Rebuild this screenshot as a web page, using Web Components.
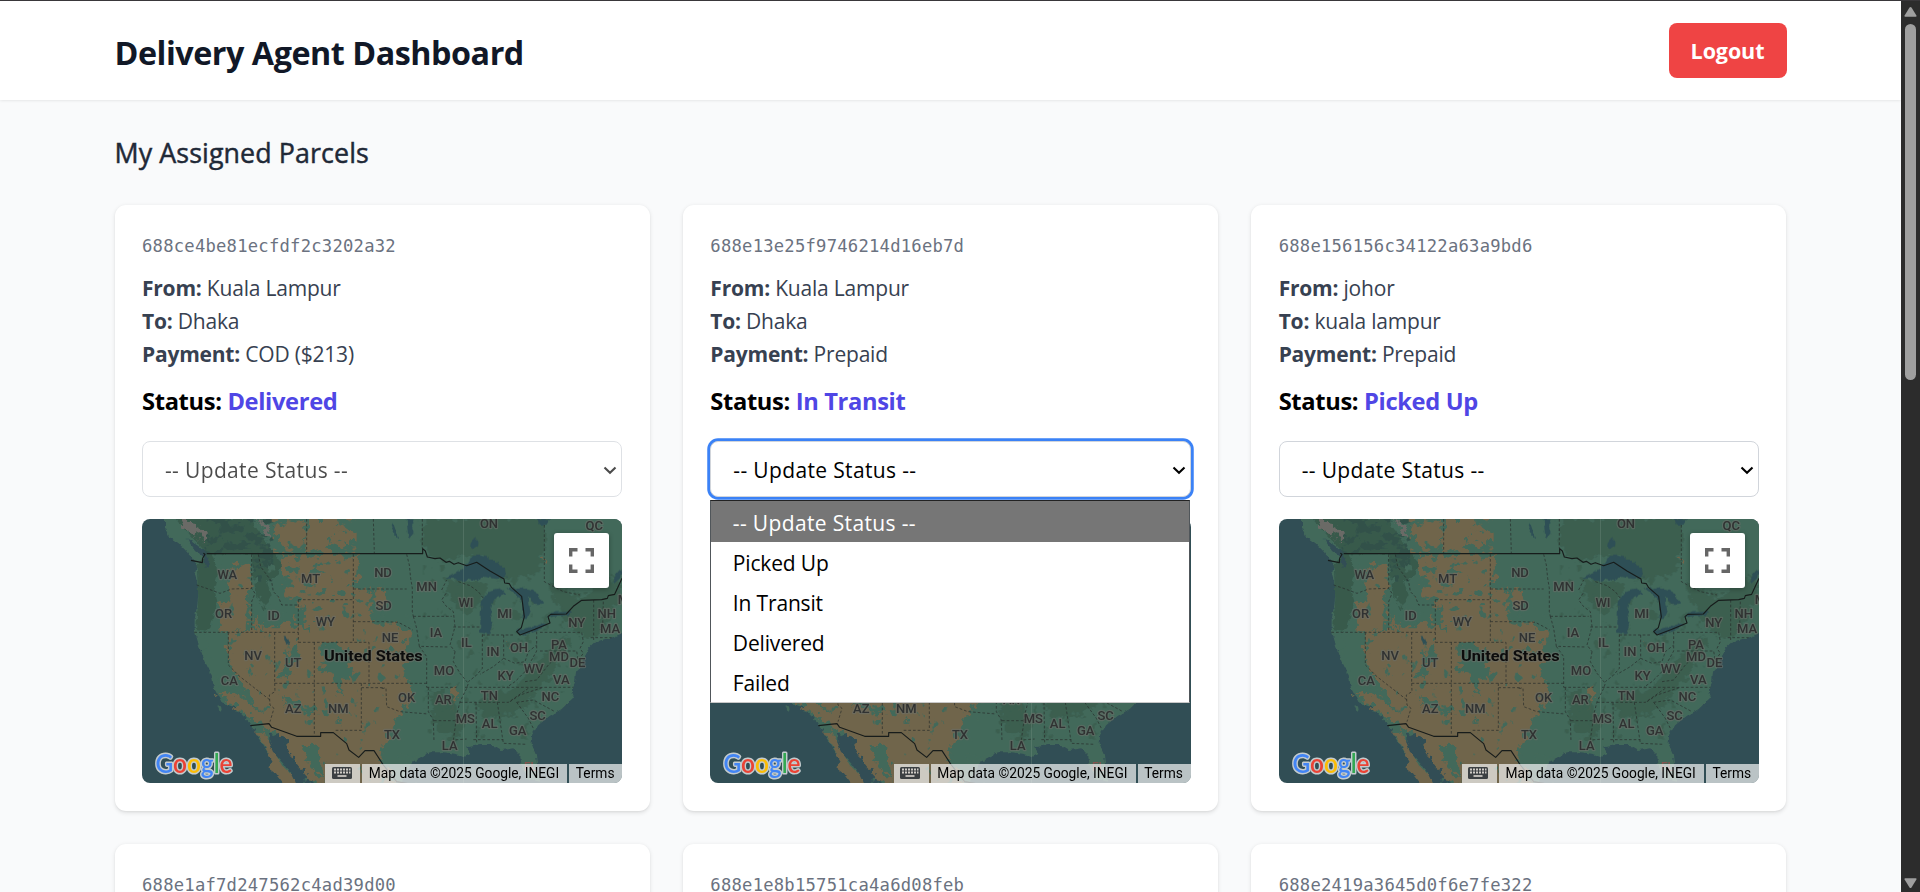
<!DOCTYPE html>
<html lang="en">
<head>
<meta charset="utf-8">
<title>Delivery Agent Dashboard</title>
<style>
html,body{margin:0;height:100%;overflow:hidden;background:#f9fafb}
body{font-family:"Open Sans","Noto Sans",sans-serif;font-size:21px;line-height:33px;color:#000}
</style>
</head>
<body>
<agent-app>
  <dash-header slot="header" heading="Delivery Agent Dashboard"></dash-header>
  <parcel-card code="688ce4be81ecfdf2c3202a32" from="Kuala Lampur" to="Dhaka" payment="COD ($213)" status="Delivered" state="disabled"></parcel-card>
  <parcel-card code="688e13e25f9746214d16eb7d" from="Kuala Lampur" to="Dhaka" payment="Prepaid" status="In Transit" state="open"></parcel-card>
  <parcel-card code="688e156156c34122a63a9bd6" from="johor" to="kuala lampur" payment="Prepaid" status="Picked Up"></parcel-card>
  <parcel-card code="688e1af7d247562c4ad39d00"></parcel-card>
  <parcel-card code="688e1e8b15751ca4a6d08feb"></parcel-card>
  <parcel-card code="688e2419a3645d0f6e7fe322"></parcel-card>
</agent-app>

<script>
class Base extends HTMLElement {
  connectedCallback() {
    if (this.shadowRoot) return;
    this.attachShadow({ mode: 'open' }).innerHTML = this.view();
  }
  a(name) { return this.getAttribute(name) || ''; }
}

customElements.define('agent-app', class extends Base {
  view() { return `
<style>
:host{display:grid;grid-template-columns:minmax(0,1fr) 19px;height:892px;box-sizing:border-box;border-top:1px solid #39373a;overflow:hidden}
.page{overflow:hidden;background:#f9fafb}
main{width:1672px;margin:0 auto;padding-top:33px}
h2{margin:0 0 33px;font-size:26.8px;line-height:39px;font-weight:400;-webkit-text-stroke:.45px #1f2937;color:#1f2937;letter-spacing:.1px}
.grid{display:grid;grid-template-columns:repeat(3,minmax(0,1fr));gap:33px}
</style>
<div class="page"><slot name="header"></slot>
<main><h2>My Assigned Parcels</h2><div class="grid"><slot></slot></div></main></div>
<window-scrollbar></window-scrollbar>`; }
});

customElements.define('window-scrollbar', class extends Base {
  view() { return `
<style>
:host{display:flex;flex-direction:column;align-items:center;box-sizing:border-box;background:#2c2c2c;padding:5px 0 3px}
svg{display:block;width:13px;height:12px;fill:#9f9f9f}
i{display:block;width:11px;height:356px;border-radius:6px;background:#9f9f9f;margin-top:6px}
.down{margin-top:auto}
</style>
<svg viewBox="0 0 13 12"><path d="M5.5 1.6q1-1.2 2 0L12.4 9.5q.6 1.2-.8 1.2H1.4q-1.4 0-.8-1.2z"/></svg><i></i>
<svg class="down" viewBox="0 0 13 12"><path d="M5.5 10.4q1 1.2 2 0L12.4 2.5q.6-1.2-.8-1.2H1.4q-1.4 0-.8 1.2z"/></svg>`; }
});

customElements.define('dash-header', class extends Base {
  view() { return `
<style>
:host{display:block;background:#fff;box-shadow:0 1.4px 3px rgba(0,0,0,.1)}
.bar{width:1672px;height:99px;box-sizing:border-box;margin:0 auto;padding-top:22px;display:flex;justify-content:space-between}
h1{margin:7px 0 0;font-size:32.3px;line-height:44px;font-weight:700;color:#111827;letter-spacing:-.47px}
button{width:118px;height:55px;border:0;border-radius:8px;background:#ef4444;color:#fff;font:700 21.5px/55px "Open Sans",sans-serif;letter-spacing:-.1px;padding:0}
</style>
<div class="bar"><h1>${this.a('heading')}</h1><button>Logout</button></div>`; }
});

customElements.define('parcel-card', class extends Base {
  view() {
    const line = (k, v) => `<div><b>${k}:</b> ${v}</div>`;
    const body = this.a('status') ? `
<div class="info">${line('From', this.a('from'))}${line('To', this.a('to'))}${line('Payment', this.a('payment'))}</div>
<div class="status">Status: <span>${this.a('status')}</span></div>
<status-select state="${this.a('state')}"></status-select>
<parcel-map></parcel-map>` : '';
    return `
<style>
:host{display:block;box-sizing:border-box;height:606px;padding:27.5px;background:#fff;border-radius:11px;box-shadow:0 1.4px 4px rgba(0,0,0,.1),0 1.4px 2.7px -1.4px rgba(0,0,0,.1)}
.code{font:17.2px/27.5px "DejaVu Sans Mono",monospace;letter-spacing:.23px;color:#6b7280;margin-bottom:12px}
.info{color:#374151;letter-spacing:-.2px}
.info b{font-weight:700;letter-spacing:-.22px}
.status{margin:11px 0 20px;font-size:23.7px;line-height:38.5px;font-weight:700;letter-spacing:-.35px}
.status span{color:#4f46e5}
parcel-map{margin-top:22px}
</style>
<div class="code">${this.a('code')}</div>${body}`;
  }
});

customElements.define('status-select', class extends Base {
  view() {
    const open = this.a('state') === 'open';
    return `
<style>
:host{display:block;position:relative;height:56px}
.box{display:flex;align-items:center;justify-content:space-between;box-sizing:border-box;height:100%;border:1px solid #d1d5db;border-radius:8px;background:#fff;padding:3px 4px 0 22px;letter-spacing:.35px}
:host([state=open]) .box{box-shadow:0 0 0 2.75px #3b82f6}
:host([state=disabled]) .box{opacity:.7}
svg{width:14px;height:9px;fill:none;stroke:currentColor;stroke-width:2.1}
</style>
<div class="box"><span>-- Update Status --</span><svg viewBox="0 0 14 9"><path d="M1.5 1.5 7 6.8 12.5 1.5"/></svg></div>
${open ? '<status-menu></status-menu>' : ''}`;
  }
});

customElements.define('status-menu', class extends Base {
  view() { return `
<style>
:host{display:block;position:absolute;z-index:5;left:0;top:59px;width:480px;box-sizing:border-box;background:#fff;border:1px solid #50565a;border-top-color:#222;border-bottom-color:#c8c8c8}
div{height:40px;line-height:43px;padding-left:21.5px;letter-spacing:-.16px}
.on{height:41px;line-height:45px;background:#767676;color:#fff;letter-spacing:.35px}
</style>
<div class="on">-- Update Status --</div><div>Picked Up</div><div>In Transit</div><div>Delivered</div><div>Failed</div>`; }
});

const LABELS = [['WA',262,191],['MT',512,203],['OR',251,308],['ID',401,316],['WY',556,333],['NV',339,434],['UT',460,455],['CA',268,510],['AZ',460,595],['NM',595,595],['ND',729,187],['SD',731,284],['NE',750,380],['MN',860,228],['WI',978,277],['MI',1094,308],['IA',888,367],['IL',979,397],['IN',1059,422],['OH',1137,410],['PA',1257,402],['MD',1257,438],['DE',1312,457],['NY',1310,336],['NH',1400,308],['MA',1410,355],['WV',1181,473],['VA',1264,507],['KY',1097,496],['MO',912,480],['OK',800,560],['AR',910,567],['TN',1048,556],['NC',1231,559],['SC',1193,616],['MS',976,625],['AL',1049,639],['GA',1133,659],['LA',929,704],['TX',756,673],['ON',1047,39],['QC',1363,46],['ME',1461,267]];

customElements.define('parcel-map', class extends Base {
  view() { return `
<style>
:host{display:block;position:relative;height:264px;border-radius:8px;overflow:hidden;background:#314e55;font-family:Roboto,sans-serif}
svg{display:block}
.map{width:480px;height:264px}
.full{position:absolute;right:13.5px;top:14px;width:55px;height:55px;border-radius:3px;background:#fff;box-shadow:0 1px 5px rgba(0,0,0,.3);display:grid;place-items:center}
.logo{position:absolute;left:8px;bottom:0;width:90px;height:36px}
.legal{position:absolute;right:0;bottom:0;display:flex;gap:2px;height:19px;font-size:13.75px;line-height:19px;color:#000}
.legal span{background:rgba(245,245,245,.7);padding:0 6.5px;box-sizing:border-box;white-space:nowrap}
.kb{width:35px;display:flex;align-items:center}
.md{width:205px}.tm{width:53px}
</style>
<svg class="map" viewBox="6 12 1440 792">
<defs>
<filter id="rough" x="-5%" y="-5%" width="110%" height="110%"><feTurbulence type="fractalNoise" baseFrequency=".045" numOctaves="3" seed="4" result="n"/><feDisplacementMap in="SourceGraphic" in2="n" scale="50" xChannelSelector="R" yChannelSelector="G"/></filter>
<filter id="coast" x="-5%" y="-5%" width="110%" height="110%"><feTurbulence type="fractalNoise" baseFrequency=".07" numOctaves="2" seed="2" result="n"/><feDisplacementMap in="SourceGraphic" in2="n" scale="14" xChannelSelector="R" yChannelSelector="G"/></filter>
<filter id="patch" x="0" y="0" width="100%" height="100%"><feTurbulence type="fractalNoise" baseFrequency=".03 .038" numOctaves="3" seed="11"/><feColorMatrix values="0 0 0 0 0 0 0 0 0 0 0 0 0 0 0 14 0 0 0 -7"/><feComposite in="SourceGraphic" operator="in"/></filter>
<filter id="half" x="0" y="0" width="100%" height="100%"><feTurbulence type="fractalNoise" baseFrequency=".03 .04" numOctaves="3" seed="11"/><feColorMatrix values="0 0 0 0 0 0 0 0 0 0 0 0 0 0 0 16 0 0 0 -8.4"/><feComposite in="SourceGraphic" operator="in"/></filter>
<filter id="few" x="0" y="0" width="100%" height="100%"><feTurbulence type="fractalNoise" baseFrequency=".035 .045" numOctaves="3" seed="11"/><feColorMatrix values="0 0 0 0 0 0 0 0 0 0 0 0 0 0 0 16 0 0 0 -9.8"/><feComposite in="SourceGraphic" operator="in"/></filter>
<filter id="sparse" x="0" y="0" width="100%" height="100%"><feTurbulence type="fractalNoise" baseFrequency=".035 .028" numOctaves="3" seed="7"/><feColorMatrix values="0 0 0 0 0 0 0 0 0 0 0 0 0 0 0 16 0 0 0 -10.6"/><feComposite in="SourceGraphic" operator="in"/></filter>
</defs>
<g filter="url(#coast)">
<path fill="#43695a" d="M75 0V40L88 66 115 84 135 104 158 132 172 150 165 180 174 210 175 240 172 270 164 310 164 345 172 375 180 400 195 440 215 480 222 520 245 562 290 580 315 605 330 628 345 645 355 668 370 692 385 715 398 735 386 755 408 770 428 776 440 792 450 820H530L490 775 465 745 445 715 435 690 430 672 400 660 450 640 530 820H780L800 775 812 748 832 732 870 712 910 712 945 716 970 726 990 716 982 697 1020 690 1060 690 1085 705 1120 700 1140 720 1145 750 1160 790 1200 800 1192 760 1188 720 1175 690 1176 660 1195 630 1230 602 1265 582 1302 546 1296 530 1305 500 1308 470 1330 440 1345 400 1360 385 1410 370 1435 360 1470 340V0Z"/>
</g>
<g fill="#375a4c" filter="url(#coast)"><path d="M110 12H330L385 90 405 120 430 150 412 180 380 200 395 240 370 290 350 240 340 190 335 118H215L235 170 222 220 232 260 210 340 195 350 168 345 175 250 170 150 200 115 150 60Z"/></g>
<g fill="#31514a" filter="url(#patch)"><path d="M200 12H400V200H340V118H190Z"/></g>
<path fill="#6a6a66" filter="url(#rough)" d="M120 25 145 12 165 30 200 48 198 82 180 65 150 55ZM355 14 392 45 385 60 365 40Z"/>
<g fill="#6f654c">
<path filter="url(#rough)" d="M425 122H655L650 225 735 222 740 260 690 290 700 325 770 330 815 360 790 395 815 420 780 475 815 520 800 580 770 610 745 680 725 700 735 740 770 820H545L490 775 470 745 450 715 430 665 385 645 330 600 250 555 235 530 300 540 370 600 300 500 268 450 265 350H330L350 290 355 345 400 330 440 330 475 290 475 260 440 255 425 220 440 190 425 150Z"/>
<path filter="url(#rough)" d="M275 145 330 150 335 210 325 250 332 300 325 345 245 350 235 270 280 240 265 200Z"/>
<path filter="url(#half)" d="M395 12H650V115H400Z"/>
<path filter="url(#rough)" d="M500 12H590L585 40 640 70 630 85 575 70 560 100 505 110ZM405 50 440 20 490 25 500 75 460 95 425 85Z"/>
<path filter="url(#coast)" d="M345 650 375 655 400 705 425 750 465 790 480 820H440L405 775 385 760 396 735 372 690Z"/>
</g>
<path fill="#314e55" filter="url(#coast)" d="M388 655 400 660 430 670 436 690 446 715 466 745 492 775 524 820H474L452 775 425 740 402 715 388 682ZM140 70 170 90 200 115 210 145 198 160 190 125 165 105Z"/>
<g fill="#43695a">
<path filter="url(#few)" d="M410 120H650V270H440Z"/><path filter="url(#few)" d="M640 225H740V330H640ZM360 270H560V340H360Z"/><path filter="url(#sparse)" d="M240 118H480V600H230Z"/><path filter="url(#sparse)" d="M520 260H830V820H470Z"/>
<path filter="url(#rough)" d="M540 395 585 385 630 405 625 450 640 485 610 500 610 545 595 530 580 485 535 470 555 440ZM455 385 480 380 475 420 440 490 410 490 440 455ZM460 290 500 270 495 330 520 350 475 335ZM440 550 480 570 545 585 525 605 490 595 425 565ZM485 690 520 690 545 720 550 804 500 740ZM595 605 603 610 600 635ZM725 700 745 740 720 755ZM195 360 262 355 268 450 280 490 255 480 245 540 220 480Z"/>
</g>
<g fill="#6f654c"><path filter="url(#rough)" d="M930 530 955 515 958 530 942 570 940 590ZM1100 393 1115 390 1110 400ZM1205 130 1215 135 1208 145Z"/></g>
<g fill="#3a5c4e" opacity=".75">
<path filter="url(#rough)" d="M850 12H1215V90L1200 150 1170 190 1070 190 1000 120 900 140 845 100Z"/>
<path filter="url(#rough)" d="M920 190 1040 210 1020 270 970 300 920 230ZM870 520 920 535 950 580 970 640 945 680 890 640ZM1120 520 1210 430 1260 360 1300 370 1240 470 1140 590 1040 620 1000 560ZM1225 200 1330 250 1420 180 1446 240 1370 370 1290 350Z"/>
<path filter="url(#sparse)" d="M850 150H1290V580H1180V680H850Z"/>
</g>
<g fill="#2f4f56" filter="url(#coast)">
<path d="M915 192 952 172 985 145 992 125 1022 121 1062 135 1094 160 1100 187 1070 192 1032 185 1012 198 982 190 970 202 945 190ZM1020 352 1022 300 1026 255 1046 230 1086 222 1096 235 1070 246 1056 268 1051 300 1056 330 1048 358ZM1100 218 1150 220 1186 230 1212 266 1186 267 1166 246 1170 285 1160 312 1148 312 1146 260 1130 240ZM1128 345 1146 362 1190 346 1225 330 1220 322 1180 335ZM1220 310 1235 292 1296 290 1286 303 1240 304ZM760 25 775 70 765 60 752 30ZM800 12 820 14 820 60 805 70ZM990 90 1005 65 1018 90 1000 104ZM1190 12H1230L1220 32 1200 28ZM430 365 440 368 447 385 438 388ZM1420 190 1446 160 1440 190 1422 205Z"/>
</g>
<path stroke="#789386" opacity=".5" stroke-width="2" d="M970 12V804"/>
<g fill="none" stroke="#272c2a" opacity=".8" stroke-width="2.5" stroke-dasharray="8 6">
<path d="M335 118V220L345 235 335 260V352M170 210 205 222 240 235 275 222 335 220M163 352H475M355 118 362 155 395 200 400 230 415 245 425 270 475 270M500 12V114M640 118V382M475 254H640M475 254V382M475 382H687V505M265 352V450L300 485 390 555M404 352V505M404 505H863M404 505 405 530 388 540 390 570 402 580 390 620M523 382V662M664 505V646H583M640 222H800M640 320H740L775 322 800 335 818 345M700 12 703 114M800 118 808 150 812 190 817 220 817 290 820 304M820 304H935M918 235 905 255 920 275 940 290 945 335 930 390 945 410M820 304 830 340 838 394 925 396M838 394 860 425 860 517M860 517 950 517M865 517V590L880 615 882 680M725 520 738 520 740 575 780 590 865 597M664 518H735M945 410 940 440 960 475 985 505 980 520 960 560 950 600 945 640 940 675 980 672M882 617H948M905 225 920 195M955 200 990 212 1015 230 1030 250M940 336H1018M1027 358V460L1010 480 985 500M1027 360H1125M1091 360V430L1060 455 1020 478M1091 430 1125 445 1155 440 1165 410 1190 390M1190 350V408L1175 435 1155 470M1155 470 1125 500 1100 517M975 517H1300M960 562H1105L1165 520M1008 562 1010 685M1000 674H1090M1072 562 1087 665 1090 685 1160 688M1130 562 1165 610 1180 640M1130 562 1180 555 1245 590M1155 500 1190 495 1225 450 1245 430M1200 352H1325L1330 380 1320 400 1330 415 1315 435M1200 408H1310L1315 440M1361 255V380M1352 368H1415M1390 260 1388 330 1380 345M847 12V100M1213 30V200L1270 230 1320 240M1110 560 1140 540 1210 517"/>
</g>
<g fill="none" stroke="#171c1b" stroke-width="3.4" stroke-linejoin="round">
<path d="M153 136 187 143 188 130 195 118 190 115M200 116H848V101L856 108 862 126 885 131 900 129 918 142 928 139 942 148 955 143 980 152 1010 142 1050 168 1092 192 1094 204 1108 206 1115 218 1145 244 1153 305 1144 338 1130 350 1140 360 1185 343 1230 324 1224 305 1232 298 1279 297 1300 274 1325 256 1385 254 1402 250 1405 242 1424 238 1446 190"/><path d="M331 632 387 626 395 637 470 664H542V653H580L620 686 627 705 656 727 675 707H702L730 750 770 800 840 812"/>
</g>
<g font-family="Roboto,sans-serif" font-size="39" text-anchor="middle" fill="#303232" stroke="#6c706a" stroke-opacity=".55" stroke-width="7" stroke-linejoin="round" paint-order="stroke" font-weight="500">
${LABELS.map(([t,x,y]) => `<text x="${x}" y="${y}">${t}</text>`).join('')}
<text x="700" y="437" font-size="46" font-weight="700" fill="#0c0c0c" textLength="296" lengthAdjust="spacingAndGlyphs">United States</text>
</g>
<g font-family="Roboto,sans-serif" font-size="36" font-weight="500" fill="#84544f"><text x="1152" y="768">FL</text></g>
</svg>
<svg class="logo" viewBox="0 0 90 36"><text x="5.5" y="25.5" font-family="Lato,sans-serif" font-weight="600" font-size="26" textLength="77" lengthAdjust="spacingAndGlyphs" stroke="#c3cbce" stroke-width="3" stroke-linejoin="round" paint-order="stroke"><tspan fill="#4285f4">G</tspan><tspan fill="#ea4335">o</tspan><tspan fill="#fbbc05">o</tspan><tspan fill="#4285f4">g</tspan><tspan fill="#34a853">l</tspan><tspan fill="#ea4335">e</tspan></text></svg>
<div class="full"><svg width="25" height="25" viewBox="0 0 25 25" fill="none" stroke="#666" stroke-width="3.4"><path d="M1.7 8.5V1.7H8.5M16.5 1.7H23.3V8.5M23.3 16.5V23.3H16.5M8.5 23.3H1.7V16.5"/></svg></div>
<div class="legal"><span class="kb"><svg width="20" height="12" viewBox="0 0 20 12"><rect width="20" height="12" rx="1.5" fill="#3c4043"/><path stroke="#d0ccc7" stroke-width="2" stroke-dasharray="2 1" d="M2 2.5H18.5M2 5.5H18.5"/><path stroke="#d0ccc7" stroke-width="1.7" d="M5.5 9H14.5"/></svg></span><span class="md">Map data ©2025 Google, INEGI</span><span class="tm">Terms</span></div>`; }
});
</script>
</body>
</html>
